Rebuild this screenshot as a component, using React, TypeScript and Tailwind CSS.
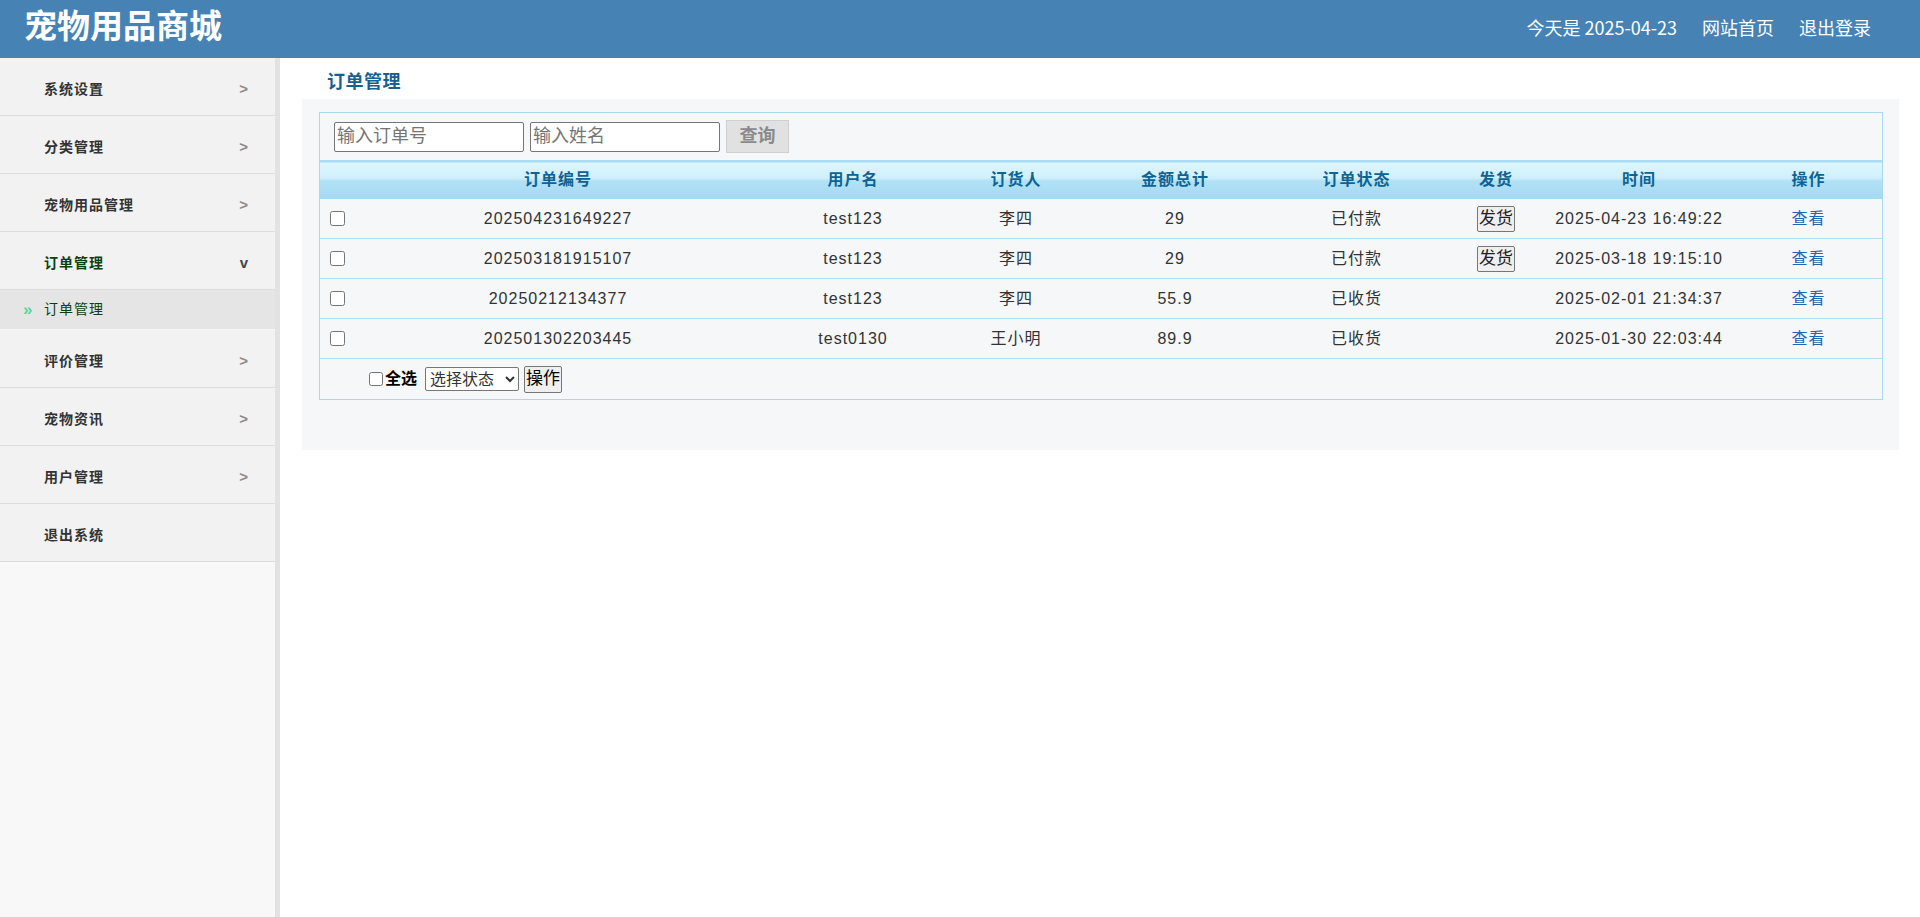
import { useState } from 'react';

type Order = {
  no: string;
  user: string;
  buyer: string;
  total: string;
  status: string;
  canShip: boolean;
  time: string;
};

const orders: Order[] = [
  { no: '202504231649227', user: 'test123', buyer: '李四', total: '29', status: '已付款', canShip: true, time: '2025-04-23 16:49:22' },
  { no: '202503181915107', user: 'test123', buyer: '李四', total: '29', status: '已付款', canShip: true, time: '2025-03-18 19:15:10' },
  { no: '20250212134377', user: 'test123', buyer: '李四', total: '55.9', status: '已收货', canShip: false, time: '2025-02-01 21:34:37' },
  { no: '202501302203445', user: 'test0130', buyer: '王小明', total: '89.9', status: '已收货', canShip: false, time: '2025-01-30 22:03:44' },
];

const menuTop = ['系统设置', '分类管理', '宠物用品管理'];
const menuBottom = ['评价管理', '宠物资讯', '用户管理'];

const cols = 'grid grid-cols-[36px_404px_186px_140px_178px_185px_94px_192px_1fr] items-center';

function MenuItem({ label, arrow = '>', active = false }: { label: string; arrow?: string | null; active?: boolean }) {
  return (
    <div className="h-[58px] flex items-center justify-between pt-[6px] pl-[44px] pr-[27px] bg-[#f2f2f2] border-b border-[#dcdcdc]">
      <span className={`text-[14px] font-bold tracking-[1px] ${active ? 'text-[#0b3f0b]' : 'text-[#333]'}`}>{label}</span>
      {arrow && (
        <span className={`text-[15px] font-bold font-['Liberation_Sans',sans-serif] ${active ? 'text-[#444]' : 'text-[#8a8a8a]'}`}>{arrow}</span>
      )}
    </div>
  );
}

function Sidebar() {
  return (
    <aside className="w-[280px] shrink-0 bg-[#f8f8f8] border-r-[5px] border-[#e2e2e2]">
      {menuTop.map((m) => (
        <MenuItem key={m} label={m} />
      ))}
      <MenuItem label="订单管理" arrow="v" active />
      <div className="h-[40px] flex items-center pl-[23px] bg-[#e5e5e5] border-b border-[#f6f6f6]">
        <span className="w-[21px] text-[17px] leading-none font-bold text-[#5cd49a] font-['Liberation_Sans',sans-serif]">»</span>
        <span className="text-[14px] tracking-[1px] text-[#0b3f0b]">订单管理</span>
      </div>
      {menuBottom.map((m) => (
        <MenuItem key={m} label={m} />
      ))}
      <MenuItem label="退出系统" arrow={null} />
    </aside>
  );
}

function OrderTable() {
  const [checked, setChecked] = useState<Record<string, boolean>>({});
  const allChecked = orders.every((o) => checked[o.no]);

  function toggleAll() {
    const next: Record<string, boolean> = {};
    orders.forEach((o) => (next[o.no] = !allChecked));
    setChecked(next);
  }

  return (
    <div className="border border-[#a8d8ef]">
      <div className="h-[47px] flex items-center pl-[14px] gap-[6px]">
        <input
          className="w-[190px] h-[30px] bg-white border border-[#767676] rounded-[2px] px-[2px] text-[18px] text-[#333] placeholder:text-[#757575] outline-none"
          placeholder="输入订单号"
        />
        <input
          className="w-[190px] h-[30px] bg-white border border-[#767676] rounded-[2px] px-[2px] text-[18px] text-[#333] placeholder:text-[#757575] outline-none"
          placeholder="输入姓名"
        />
        <button className="w-[63px] h-[33px] bg-[#e1e1e1] border border-[#cfcfcf] text-[18px] font-bold text-[#8a8a8a]">查询</button>
      </div>

      <div
        className={`${cols} h-[39px] text-[16px] font-bold tracking-[1px] text-[#0e6394] text-center bg-[linear-gradient(to_bottom,#a9dcf4_0px,#a9dcf4_2px,#dcf6fe_3px,#d0f0fc_18px,#b2e1f6_21px,#a3daf3_39px)]`}
      >
        <span />
        <span>订单编号</span>
        <span>用户名</span>
        <span>订货人</span>
        <span>金额总计</span>
        <span>订单状态</span>
        <span>发货</span>
        <span>时间</span>
        <span>操作</span>
      </div>

      {orders.map((o) => (
        <div key={o.no} className={`${cols} h-[40px] border-b border-[#b1ddf1] text-[16px] tracking-[1px] text-[#333] text-center`}>
          <span className="flex pl-[10px]">
            <input
              type="checkbox"
              className="w-[15px] h-[15px] m-0"
              checked={!!checked[o.no]}
              onChange={() => setChecked({ ...checked, [o.no]: !checked[o.no] })}
            />
          </span>
          <span>{o.no}</span>
          <span>{o.user}</span>
          <span>{o.buyer}</span>
          <span>{o.total}</span>
          <span>{o.status}</span>
          <span className="flex justify-center">
            {o.canShip && (
              <button className="h-[26px] px-[1px] bg-[#efefef] border border-[#767676] rounded-[2px] text-[17px] tracking-normal text-[#222] leading-[22px]">
                发货
              </button>
            )}
          </span>
          <span>{o.time}</span>
          <span>
            <a href="#" className="text-[#1d66b3]">查看</a>
          </span>
        </div>
      ))}

      <div className="h-[40px] flex items-center pl-[49px] text-[16px] text-black">
        <input type="checkbox" className="w-[14px] h-[14px] m-0 mr-[2px]" checked={allChecked} onChange={toggleAll} />
        <span className="font-bold">全选</span>
        <select className="ml-[8px] w-[94px] h-[24px] bg-white border border-[#767676] rounded-[2px] text-[16px] text-[#333]">
          <option>选择状态</option>
          <option>已付款</option>
          <option>已发货</option>
          <option>已收货</option>
        </select>
        <button className="ml-[5px] h-[27px] px-[1px] bg-[#efefef] border border-[#767676] rounded-[2px] text-[17px] leading-[22px]">操作</button>
      </div>
    </div>
  );
}

export default function App() {
  return (
    <div className="min-h-screen flex flex-col bg-white font-['Liberation_Sans','Noto_Sans_CJK_SC',sans-serif]">
      <header className="h-[58px] shrink-0 bg-[#4682b4] flex justify-between pl-[24px] pr-[49px] font-['Noto_Sans_CJK_SC',sans-serif]">
        <h1 className="pt-[8px] text-[33px] leading-[32px] font-bold text-white">宠物用品商城</h1>
        <nav className="pt-[15px] flex gap-[25px] text-[18px] leading-[24px] text-white">
          <span>今天是 2025-04-23</span>
          <a href="#">网站首页</a>
          <a href="#">退出登录</a>
        </nav>
      </header>

      <div className="flex flex-1">
        <Sidebar />
        <main className="flex-1">
          <h2 className="h-[41px] pl-[47px] pt-[12px] text-[18px] leading-[24px] font-bold tracking-[0.5px] text-[#17618f]">订单管理</h2>
          <div className="ml-[22px] mr-[21px] bg-[#f5f7f9] pt-[13px] pl-[17px] pr-[16px] pb-[50px]">
            <OrderTable />
          </div>
        </main>
      </div>
    </div>
  );
}
